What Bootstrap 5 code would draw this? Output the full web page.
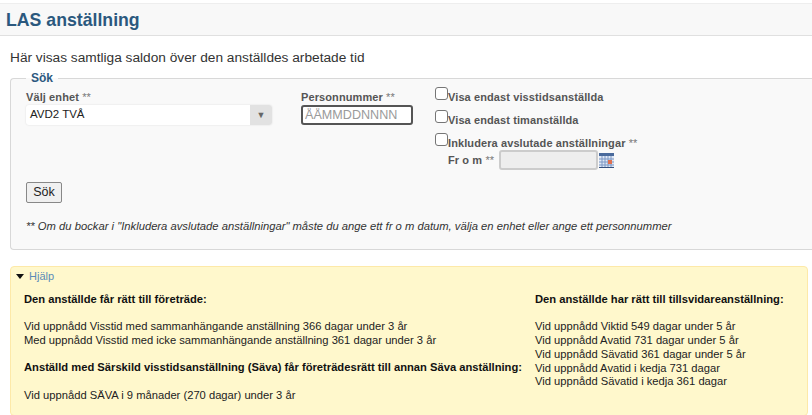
<!DOCTYPE html>
<html lang="sv">
<head>
<meta charset="utf-8">
<title>LAS anställning</title>
<link href="https://cdn.jsdelivr.net/npm/bootstrap@5.3.0/dist/css/bootstrap.min.css" rel="stylesheet">
<style>
html,body{height:415px;overflow:hidden}
body{font-family:"Liberation Sans",Arial,sans-serif;font-size:11.2px;color:#333;background:#fff;padding-top:3px}
.las-head{height:33px;background:#f8f8f8;border-top:1px solid #eee;border-bottom:1px solid #e0e0e0;padding:5px 0 0 6px;margin-bottom:14px}
.las-head h1{font-size:17.7px;font-weight:700;color:#2b587e;line-height:22px;margin:0}
.intro{font-size:13.7px;line-height:16px;margin:0 0 0 10px;color:#333}
.sok-set{margin:5px 0 0 10px;width:812px;height:179px;border:1px solid #d8d8d8;border-right:0;border-radius:4px 0 0 4px;background:#f9f9f9;padding:0 0 0 15px}
.sok-set legend{float:none;width:auto;font-size:12px;font-weight:700;line-height:14px;color:#2b587e;margin:0;padding:0 5px}
.sok-row{margin-top:-4px}
.las-label{display:block;font-size:11px;font-weight:700;color:#555;line-height:13px;letter-spacing:.1px}
.stars{font-weight:400;color:#777}
.enhet-col{width:246px;margin-right:29px;padding-top:10px}
.enhet{display:flex;height:20px;margin-top:1px;background:#fff;border-radius:3px;box-shadow:0 0 2px #ddd;align-items:center;font-size:11.5px;color:#222;padding-left:4px}
.enhet span:first-child{flex:1}
.enhet-btn{width:22px;height:20px;background:#e2e2e2;color:#666;font-size:9px;text-align:center;line-height:20px;border-radius:0 3px 3px 0}
.pnr-col{width:112px;margin-right:22px;padding-top:10px}
.pnr{width:112px;height:20px;border:2px solid #555;border-radius:3px;background:#fff;font-size:12.6px;color:#999;padding:0 2px;margin-top:1px;display:block}
.pnr::placeholder{color:#9a9a9a}
.chk-row{display:flex;align-items:flex-end;height:23px;margin:0}
.chk-box{appearance:none;width:13px;height:13px;border:1px solid #767676;border-radius:3px;background:#fff;margin:0 0 4px 0;flex:none}
.from-row{display:flex;align-items:center;margin-left:13px;height:20px}
.from-row .las-label{width:51px}
.from-inp{width:99px;height:20px;border:2px solid #ccc;border-radius:3px;background:#eee}
.cal{margin-left:1px;display:block}
.sok-btn{font-family:inherit;font-size:12.5px;color:#222;height:21px;width:36px;padding:0;background:#f0f0f0;border:1px solid #888;border-radius:2px;display:block;margin-top:12px}
.note{font-size:11.24px;font-style:italic;color:#333;line-height:13px;margin:17px 0 0}
.hjalp{margin:16px 4px 0 10px;height:150px;background:#fff8cc;border:1px solid #fde9a8;border-radius:4px;padding:2px 0 0 4px;color:#333}
.hjalp-link{display:flex;align-items:center;line-height:14px;color:#5b8cb8;font-size:11px}
.tri{width:0;height:0;border:4px solid transparent;border-top:5px solid #111;border-bottom:0;margin:0 5px 0 1px}
.hjalp-cols{display:flex;margin:10px 0 0 9px;line-height:13.7px;font-size:11.2px;color:#222}
.hjalp-cols p{margin:0}
.hjalp-cols b{color:#111}
.left-col{width:511px}
.gap{height:13.7px}
</style>
</head>
<body>
<div class="las-head"><h1>LAS anställning</h1></div>
<p class="intro">Här visas samtliga saldon över den anställdes arbetade tid</p>
<fieldset class="sok-set">
  <legend>Sök</legend>
  <div class="d-flex sok-row">
    <div class="enhet-col">
      <label class="las-label">Välj enhet <span class="stars">**</span></label>
      <div class="enhet"><span>AVD2 TVÅ</span><span class="enhet-btn">▼</span></div>
    </div>
    <div class="pnr-col">
      <label class="las-label">Personnummer <span class="stars">**</span></label>
      <input class="pnr" placeholder="ÅÅMMDDNNNN">
    </div>
    <div>
      <div class="chk-row"><input type="checkbox" class="chk-box"><label class="las-label">Visa endast visstidsanställda</label></div>
      <div class="chk-row"><input type="checkbox" class="chk-box"><label class="las-label">Visa endast timanställda</label></div>
      <div class="chk-row"><input type="checkbox" class="chk-box"><label class="las-label">Inkludera avslutade anställningar <span class="stars">**</span></label></div>
      <div class="from-row">
        <label class="las-label">Fr o m <span class="stars">**</span></label>
        <input class="from-inp" disabled>
        <svg class="cal" width="15" height="15" viewBox="0 0 15 15">
          <rect x="0" y="0" width="15" height="15" fill="#dfe8f5"/>
          <rect x="0" y="0" width="15" height="3" fill="#4a6a9c"/>
          <path d="M0 6H15M0 9H15M0 12H15M3 3V15M6 3V15M9 3V15M12 3V15" stroke="#7d97c4" stroke-width="1"/>
          <rect x="9" y="7" width="4" height="4" fill="#e0704f"/>
          <rect x="0" y="14" width="15" height="1" fill="#35507e"/>
        </svg>
      </div>
    </div>
  </div>
  <button type="button" class="sok-btn">Sök</button>
  <p class="note">** Om du bockar i "Inkludera avslutade anställningar" måste du ange ett fr o m datum, välja en enhet eller ange ett personnummer</p>
</fieldset>
<div class="hjalp">
  <div class="hjalp-link"><span class="tri"></span>Hjälp</div>
  <div class="hjalp-cols">
    <div class="left-col">
      <p><b>Den anställde får rätt till företräde:</b></p>
      <div class="gap"></div>
      <p>Vid uppnådd Visstid med sammanhängande anställning 366 dagar under 3 år</p>
      <p>Med uppnådd Visstid med icke sammanhängande anställning 361 dagar under 3 år</p>
      <div class="gap"></div>
      <p><b>Anställd med Särskild visstidsanställning (Säva) får företrädesrätt till annan Säva anställning:</b></p>
      <div class="gap"></div>
      <p>Vid uppnådd SÄVA i 9 månader (270 dagar) under 3 år</p>
    </div>
    <div>
      <p><b>Den anställde har rätt till tillsvidareanställning:</b></p>
      <div class="gap"></div>
      <p>Vid uppnådd Viktid 549 dagar under 5 år</p>
      <p>Vid uppnådd Avatid 731 dagar under 5 år</p>
      <p>Vid uppnådd Sävatid 361 dagar under 5 år</p>
      <p>Vid uppnådd Avatid i kedja 731 dagar</p>
      <p>Vid uppnådd Sävatid i kedja 361 dagar</p>
    </div>
  </div>
</div>
<script src="https://cdn.jsdelivr.net/npm/bootstrap@5.3.0/dist/js/bootstrap.bundle.min.js"></script>
</body>
</html>
